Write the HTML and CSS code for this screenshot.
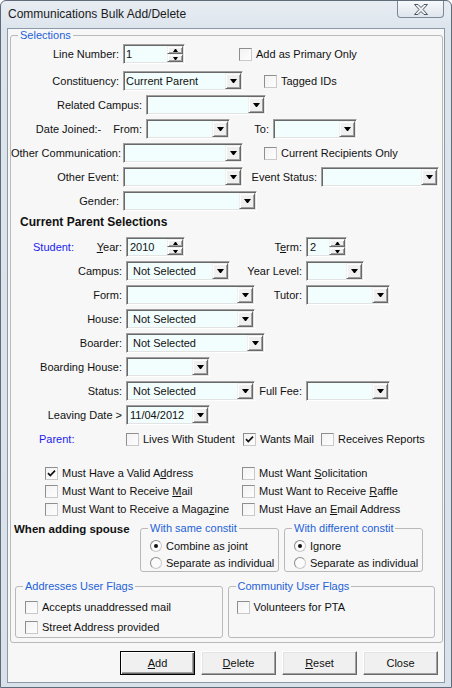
FILE: index.html
```html
<!DOCTYPE html>
<html lang="en">
<head>
    <meta charset="UTF-8">
    <title>Communications Bulk Add/Delete</title>
    <link rel="stylesheet" href="styles.css">
</head>
<body>
    <div class="window">
        <div class="titlebar">
            <span class="title">Communications Bulk Add/Delete</span>
            <button class="close-btn" aria-label="Close">
                <svg width="14" height="11" viewBox="0 0 14 11">
                    <polygon points="0.5,0.5 4,0.5 7,3.5 10,0.5 13.5,0.5 9,5.5 13.5,10.5 10,10.5 7,7.5 4,10.5 0.5,10.5 5,5.5" fill="#eef1f4" stroke="#4d5863" stroke-width="1" stroke-linejoin="round"/>
                </svg>
            </button>
        </div>

        <div class="client">
            <div class="group selections">
                <span class="group-title">Selections</span>

                <div class="row first">
                    <label class="lbl w-108">Line Number:</label>
                    <div class="spin w-62"><span class="val">1</span><span class="arrows"><span class="step up"></span><span class="step down"></span></span></div>
                    <div class="chk ml-54"><span class="box"></span><span>Add as Primary Only</span></div>
                </div>
                <div class="row second">
                    <label class="lbl w-108">Constituency:</label>
                    <div class="combo w-120"><span class="val">Current Parent</span><span class="drop"></span></div>
                    <div class="chk ml-21"><span class="box"></span><span>Tagged IDs</span></div>
                </div>
                <div class="row">
                    <label class="lbl w-131">Related Campus:</label>
                    <div class="combo w-120"><span class="val"></span><span class="drop"></span></div>
                </div>
                <div class="row">
                    <label class="lbl w-131">Date Joined:-<span class="from">From:</span></label>
                    <div class="combo w-84"><span class="val"></span><span class="drop"></span></div>
                    <label class="lbl w-39">To:</label>
                    <div class="combo w-84"><span class="val"></span><span class="drop"></span></div>
                </div>
                <div class="row">
                    <label class="lbl w-108">Other Communication:</label>
                    <div class="combo w-120"><span class="val"></span><span class="drop"></span></div>
                    <div class="chk ml-21"><span class="box"></span><span>Current Recipients Only</span></div>
                </div>
                <div class="row">
                    <label class="lbl w-108">Other Event:</label>
                    <div class="combo w-120"><span class="val"></span><span class="drop"></span></div>
                    <label class="lbl w-74">Event Status:</label>
                    <div class="combo w-118"><span class="val"></span><span class="drop"></span></div>
                </div>
                <div class="row">
                    <label class="lbl w-108">Gender:</label>
                    <div class="combo w-134"><span class="val"></span><span class="drop"></span></div>
                </div>

                <h2 class="section-title">Current Parent Selections</h2>

                <div class="row student">
                    <label class="lbl w-111 split"><span class="blue">Student:</span><span><u>Y</u>ear:</span></label>
                    <div class="spin w-59"><span class="val pad">2010</span><span class="arrows"><span class="step up"></span><span class="step down"></span></span></div>
                    <label class="lbl w-117">T<u>e</u>rm:</label>
                    <div class="spin w-41"><span class="val pad">2</span><span class="arrows"><span class="step up"></span><span class="step down"></span></span></div>
                </div>
                <div class="row">
                    <label class="lbl w-111">Campus:</label>
                    <div class="combo w-104"><span class="val wide">Not Selected</span><span class="drop"></span></div>
                    <label class="lbl w-72">Year Level:</label>
                    <div class="combo w-58"><span class="val"></span><span class="drop"></span></div>
                </div>
                <div class="row">
                    <label class="lbl w-111">Form:</label>
                    <div class="combo w-129"><span class="val"></span><span class="drop"></span></div>
                    <label class="lbl w-47">Tutor:</label>
                    <div class="combo w-84"><span class="val"></span><span class="drop"></span></div>
                </div>
                <div class="row">
                    <label class="lbl w-111">House:</label>
                    <div class="combo w-129"><span class="val wide">Not Selected</span><span class="drop"></span></div>
                </div>
                <div class="row">
                    <label class="lbl w-111">Boarder:</label>
                    <div class="combo w-139"><span class="val wide">Not Selected</span><span class="drop"></span></div>
                </div>
                <div class="row">
                    <label class="lbl w-111">Boarding House:</label>
                    <div class="combo w-84"><span class="val"></span><span class="drop"></span></div>
                </div>
                <div class="row">
                    <label class="lbl w-111">Status:</label>
                    <div class="combo w-129"><span class="val wide">Not Selected</span><span class="drop"></span></div>
                    <label class="lbl w-47">Full Fee:</label>
                    <div class="combo w-84"><span class="val"></span><span class="drop"></span></div>
                </div>
                <div class="row">
                    <label class="lbl w-111">Leaving Date &gt;</label>
                    <div class="combo w-84"><span class="val pad">11/04/2012</span><span class="drop"></span></div>
                </div>
                <div class="row parent">
                    <label class="lbl w-111 left"><span class="blue">Parent:</span></label>
                    <div class="chk w-117"><span class="box"></span><span>Lives With Student</span></div>
                    <div class="chk w-78"><span class="box on"><svg width="11" height="11" viewBox="0 0 11 11"><path d="M2 5.2 L4.3 7.6 L9 2.6" fill="none" stroke="#111" stroke-width="1.7"/></svg></span><span>Wants Mail</span></div>
                    <div class="chk"><span class="box"></span><span>Receives Reports</span></div>
                </div>

                <div class="must">
                    <div class="chk"><span class="box on"><svg width="11" height="11" viewBox="0 0 11 11"><path d="M2 5.2 L4.3 7.6 L9 2.6" fill="none" stroke="#111" stroke-width="1.7"/></svg></span><span>Must Have a Valid A<u>d</u>dress</span></div>
                    <div class="chk"><span class="box"></span><span>Must Want <u>S</u>olicitation</span></div>
                    <div class="chk"><span class="box"></span><span>Must Want to Receive <u>M</u>ail</span></div>
                    <div class="chk"><span class="box"></span><span>Must Want to Receive <u>R</u>affle</span></div>
                    <div class="chk"><span class="box"></span><span>Must Want to Receive a Maga<u>z</u>ine</span></div>
                    <div class="chk"><span class="box"></span><span>Must Have an <u>E</u>mail Address</span></div>
                </div>

                <div class="spouse">
                    <div class="spouse-label">When adding spouse</div>
                    <div class="group radio-group">
                        <span class="group-title">With same constit</span>
                        <div class="opt"><span class="radio on"></span><span>Combine as joint</span></div>
                        <div class="opt"><span class="radio"></span><span>Separate as individual</span></div>
                    </div>
                    <div class="group radio-group">
                        <span class="group-title">With different constit</span>
                        <div class="opt"><span class="radio on"></span><span>Ignore</span></div>
                        <div class="opt"><span class="radio"></span><span>Separate as individual</span></div>
                    </div>
                </div>

                <div class="flags">
                    <div class="group flag-group">
                        <span class="group-title">Addresses User Flags</span>
                        <div class="chk flag"><span class="box"></span><span>Accepts unaddressed mail</span></div>
                        <div class="chk flag"><span class="box"></span><span>Street Address provided</span></div>
                    </div>
                    <div class="group flag-group community">
                        <span class="group-title">Community User Flags</span>
                        <div class="chk flag"><span class="box"></span><span>Volunteers for PTA</span></div>
                    </div>
                </div>
            </div>

            <div class="actions">
                <button class="btn default"><u>A</u>dd</button>
                <button class="btn"><u>D</u>elete</button>
                <button class="btn"><u>R</u>eset</button>
                <button class="btn">Close</button>
            </div>
        </div>
    </div>
</body>
</html>
```

FILE: styles.css
```css
* {
    margin: 0;
    padding: 0;
    box-sizing: border-box;
}

body {
    width: 452px;
    height: 688px;
    overflow: hidden;
    font-family: "Liberation Sans", Arial, sans-serif;
    font-size: 11px;
    color: #111;
    background: #fff;
}

u {
    text-decoration: underline;
    text-underline-offset: 1px;
}

/* window frame */
.window {
    width: 452px;
    height: 688px;
    border: 1px solid #5f6b78;
    border-radius: 6px 6px 0 0;
    background: linear-gradient(#e8edf3, #dce4ec 30px, #d9e1ea);
    padding: 0 6px 4px;
    display: flex;
    flex-direction: column;
}

.titlebar {
    height: 27px;
    flex: none;
    display: flex;
    align-items: flex-start;
    justify-content: space-between;
}

.title {
    font-size: 12px;
    line-height: 14px;
    padding: 6px 0 0 1px;
    color: #1b1b1b;
}

.close-btn {
    width: 47px;
    height: 17px;
    margin-right: 1px;
    border: 1px solid #7d8896;
    border-top: none;
    border-radius: 0 0 4px 4px;
    background: linear-gradient(#f7f9fb, #dfe5ec);
    display: flex;
    align-items: center;
    justify-content: center;
}

.client {
    flex: 1;
    background: #f7f7f7;
    border: 1px solid #8d99a6;
    display: flex;
    flex-direction: column;
}

/* group boxes */
.group {
    border: 1px solid #b9b9b9;
    border-radius: 3px;
}

.group-title {
    display: block;
    width: fit-content;
    height: 13px;
    line-height: 13px;
    margin: -7px 0 0 7px;
    padding: 0 2px;
    background: #f7f7f7;
    color: #2462d8;
    white-space: nowrap;
}

.selections {
    margin: 6px 1px 0 2px;
    padding-bottom: 4px;
}

/* form rows */
.row {
    display: flex;
    align-items: center;
    height: 20px;
    margin-top: 4px;
}

.row.first { margin-top: 2px; }
.row.second { margin-top: 7px; }
.row.student { margin-top: 8px; }
.row.parent { height: 16px; margin-top: 6px; }

.lbl {
    flex: none;
    text-align: right;
    margin-right: 4px;
    white-space: nowrap;
}

.lbl.split {
    display: flex;
    justify-content: space-between;
    padding-left: 22px;
}

.lbl.left {
    text-align: left;
    padding-left: 28px;
}

.from { margin-left: 12px; }

.blue { color: #1c1cf0; }

.section-title {
    font-size: 12px;
    font-weight: 700;
    line-height: 14px;
    margin-top: 4px;
    padding-left: 9px;
}

.w-39 { width: 39px; }
.w-41 { width: 41px; }
.w-47 { width: 47px; }
.w-58 { width: 58px; }
.w-59 { width: 59px; }
.w-62 { width: 62px; }
.w-72 { width: 72px; }
.w-74 { width: 74px; }
.w-78 { width: 78px; }
.w-84 { width: 84px; }
.w-104 { width: 104px; }
.w-108 { width: 108px; }
.w-111 { width: 111px; }
.w-117 { width: 117px; }
.w-118 { width: 118px; }
.w-120 { width: 120px; }
.w-129 { width: 129px; }
.w-131 { width: 131px; }
.w-134 { width: 134px; }
.w-139 { width: 139px; }
.ml-21 { margin-left: 21px; }
.ml-54 { margin-left: 54px; }

/* combo and spinner fields */
.combo,
.spin {
    flex: none;
    display: flex;
    height: 20px;
    padding: 1px;
    border: 1px solid;
    border-color: #a0a0a0 #fff #fff #a0a0a0;
    box-shadow: inset 1px 1px 0 #696969, inset -1px -1px 0 #e3e3e3;
    background: #f2fdfd;
}

.val {
    flex: 1;
    line-height: 16px;
    padding-left: 1px;
    white-space: nowrap;
    overflow: hidden;
}

.val.pad { padding-left: 2px; }
.val.wide { padding-left: 5px; }

.drop,
.step {
    flex: none;
    display: flex;
    align-items: center;
    justify-content: center;
    background: #f0f0f0;
    border: 1px solid;
    border-color: #f0f0f0 #696969 #696969 #f0f0f0;
    box-shadow: inset 1px 1px 0 #fff, inset -1px -1px 0 #a0a0a0;
}

.drop {
    width: 16px;
    height: 16px;
}

/* little black arrows drawn with borders */
.drop::after {
    content: "";
    width: 1px;
    height: 0;
    border-top: 4px solid #000;
    border-left: 3px solid transparent;
    border-right: 3px solid transparent;
}

.arrows {
    flex: none;
    display: flex;
    flex-direction: column;
    width: 16px;
}

.step {
    height: 8px;
}

.step::after {
    content: "";
    width: 1px;
    height: 0;
    border-left: 2px solid transparent;
    border-right: 2px solid transparent;
}

.step.up::after { border-bottom: 3px solid #000; }
.step.down::after { border-top: 3px solid #000; }

/* checkboxes and radios */
.chk {
    flex: none;
    display: flex;
    align-items: center;
    white-space: nowrap;
}

.box {
    flex: none;
    width: 13px;
    height: 13px;
    margin-right: 4px;
    border: 1px solid;
    border-color: #8e8e8e #c9c9c9 #c9c9c9 #8e8e8e;
    background: linear-gradient(135deg, #f3f3f3, #fdfdfd);
    display: flex;
    align-items: center;
    justify-content: center;
}

.radio {
    flex: none;
    position: relative;
    width: 12px;
    height: 12px;
    margin-right: 4px;
    border-radius: 50%;
    border: 1px solid;
    border-color: #8a8a8a #c8c8c8 #c8c8c8 #8a8a8a;
    background: #fbfbfb;
}

.radio.on::after {
    content: "";
    position: absolute;
    left: 3px;
    top: 3px;
    width: 4px;
    height: 4px;
    border-radius: 50%;
    background: #111;
}

.must {
    display: grid;
    grid-template-columns: 197px auto;
    grid-auto-rows: 18px;
    align-items: center;
    margin-top: 17px;
    padding-left: 34px;
}

/* spouse options */
.spouse {
    display: flex;
    align-items: flex-start;
    gap: 5px;
    margin-top: 3px;
    padding-left: 3px;
}

.spouse-label {
    width: 121px;
    font-size: 11.5px;
    font-weight: 700;
    line-height: 14px;
    margin-top: 1px;
}

.radio-group {
    width: 139px;
    margin-top: 7px;
    padding: 0 0 0 9px;
}

.radio-group .group-title {
    margin-left: -2px;
    margin-bottom: 2px;
}

.opt {
    display: flex;
    align-items: center;
    height: 17px;
    white-space: nowrap;
}

/* user flags */
.flags {
    display: grid;
    grid-template-columns: 1fr 1fr;
    gap: 5px;
    margin-top: 7px;
    padding: 0 7px 0 4px;
}

.flag-group {
    margin-top: 7px;
    padding: 0 0 0 9px;
}

.flag-group.community { padding-left: 8px; }

.flag-group .group-title {
    margin-left: -2px;
    margin-bottom: 4px;
}

.community .group-title { margin-left: -1px; }

.flag { height: 20px; }

/* bottom buttons */
.actions {
    display: flex;
    justify-content: flex-end;
    gap: 6px;
    margin-top: 8px;
    padding-right: 6px;
}

.btn {
    width: 75px;
    height: 24px;
    font: inherit;
    color: #111;
    background: #f0f0f0;
    border: 1px solid;
    border-color: #fff #696969 #696969 #fff;
    box-shadow: inset -1px -1px 0 #a0a0a0, inset 1px 1px 0 #e3e3e3;
}

.btn.default {
    border-color: #000;
    box-shadow: inset 1px 1px 0 #fff, inset -1px -1px 0 #696969, inset -2px -2px 0 #a0a0a0;
}
```
